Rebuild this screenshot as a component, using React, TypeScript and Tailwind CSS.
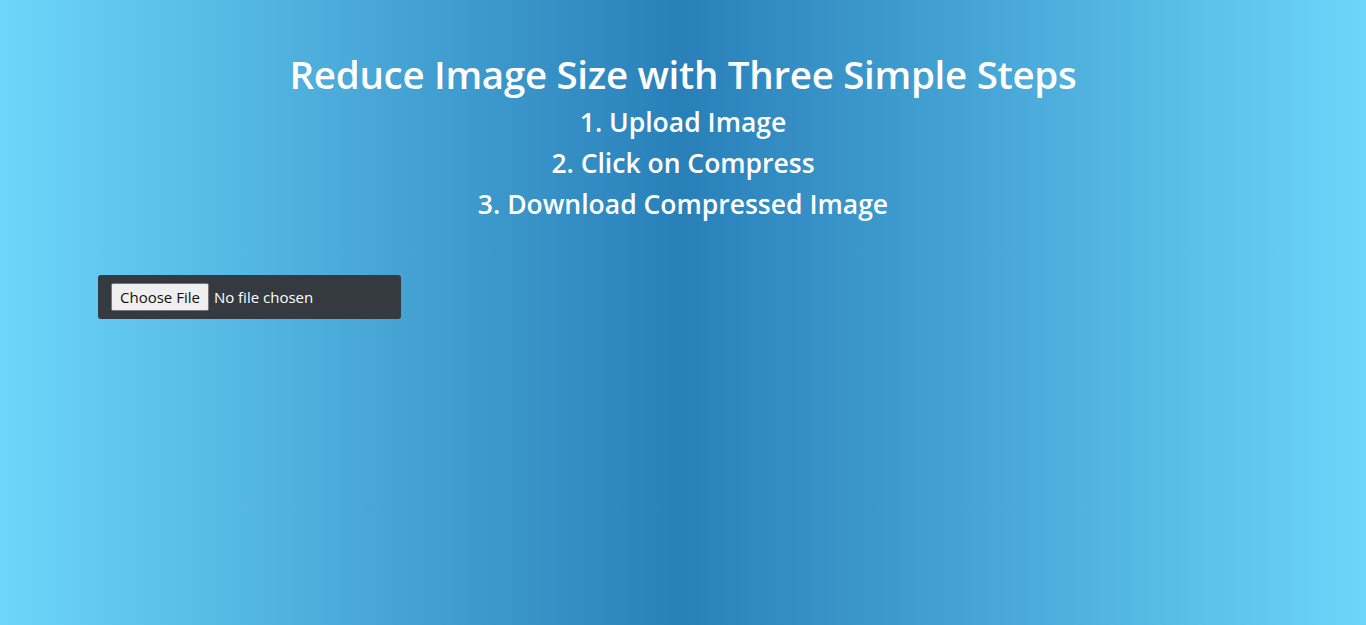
import React from "react";

export default function App() {
  return (
    <div
      className="w-[1366px] h-[625px] overflow-hidden bg-[linear-gradient(to_right,#6dd5fa,#2980b9,#6dd5fa)] text-white"
      style={{ fontFamily: '"Open Sans", "Noto Sans", sans-serif' }}
    >
      <div className="pt-[50px] flex flex-col items-center">
        <h1 className="text-[38.5px] leading-[48px] font-semibold tracking-[-0.3px] mb-[8px]">
          Reduce Image Size with Three Simple Steps
        </h1>
        <h3 className="text-[26.5px] leading-[33px] font-semibold mb-[8px]">1. Upload Image</h3>
        <h3 className="text-[26.5px] leading-[33px] font-semibold mb-[8px]">2. Click on Compress</h3>
        <h3 className="text-[26.5px] leading-[33px] font-semibold mb-[8px]">3. Download Compressed Image</h3>
      </div>
      <div className="pl-[98px] pt-[46px]">
        <div className="w-[303px] h-[44px] bg-[#343a40] rounded-[3px] flex items-center pl-[13px]">
          <div className="h-[28px] px-[8px] flex items-center bg-[#efefef] border border-[#767676] rounded-[2px] text-[#111] text-[15px]">
            Choose File
          </div>
          <span className="ml-[5px] text-[15px]">No file chosen</span>
        </div>
      </div>
    </div>
  );
}
